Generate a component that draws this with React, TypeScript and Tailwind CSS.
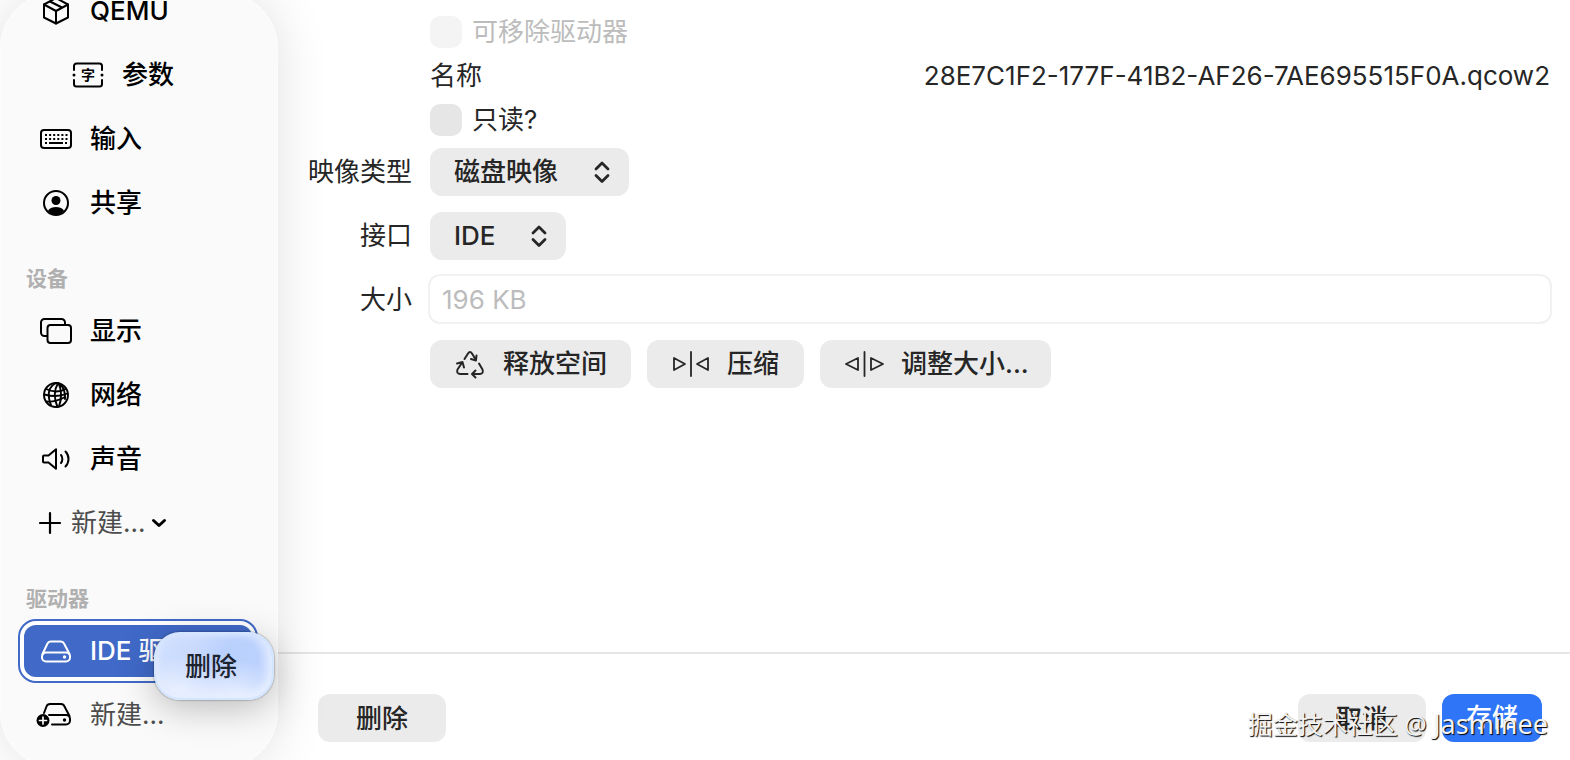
/**
 * Virtual machine settings: sidebar navigation and drive details form.
 */

import React from 'react'
import clsx from 'clsx'

interface IconProps {
  className?: string
}

interface IconFrameProps extends IconProps {
  width?: number
  strokeWidth?: number
  children: React.ReactNode
}

// Shared frame for all outline icons
function IconFrame({ width = 32, strokeWidth = 2, className, children }: IconFrameProps) {
  return (
    <svg
      width={width}
      height={32}
      viewBox={`0 0 ${width} 32`}
      fill="none"
      stroke="currentColor"
      strokeWidth={strokeWidth}
      strokeLinecap="round"
      strokeLinejoin="round"
      aria-hidden="true"
      className={clsx('shrink-0', className)}
    >
      {children}
    </svg>
  )
}

function BoxIcon() {
  return (
    <IconFrame>
      <path d="M16 3 28 9.5v13L16 28.500 4 22.500v-13z" />
      <path d="M4 9.500 16 16l12-6.500M16 16v12.500M10 6.500l12 6" />
    </IconFrame>
  )
}

function ArgumentsIcon() {
  return (
    <IconFrame>
      <path d="M2 11V7a2.500 2.500 0 0 1 2.500-2.500h23A2.500 2.500 0 0 1 30 7v4M2 21v4a2.500 2.500 0 0 0 2.500 2.500h23A2.500 2.500 0 0 0 30 25v-4" />
      <circle cx="2" cy="16" r="1.500" fill="currentColor" stroke="none" />
      <circle cx="30" cy="16" r="1.500" fill="currentColor" stroke="none" />
      <text
        x="16"
        y="21"
        textAnchor="middle"
        fill="currentColor"
        stroke="none"
        className="text-[14px] font-bold"
      >
        字
      </text>
    </IconFrame>
  )
}

function KeyboardIcon() {
  return (
    <IconFrame>
      <rect x="1" y="7" width="30" height="18" rx="3" />
      <path d="M5 12h22.500M5 16h22.500" strokeDasharray="2 2.100" strokeLinecap="butt" />
      <path d="M5 20h2M9 20h14M25 20h2" strokeLinecap="butt" />
    </IconFrame>
  )
}

function PersonIcon() {
  return (
    <IconFrame>
      <circle cx="16" cy="16" r="12" />
      <circle cx="16" cy="13.500" r="4.500" fill="currentColor" stroke="none" />
      <path d="M8 23.500c2-3 5-3.500 8-3.500s6 .5 8 3.500c-2 3-5 4.500-8 4.500s-6-1.500-8-4.500z" fill="currentColor" stroke="none" />
    </IconFrame>
  )
}

function DisplayIcon() {
  return (
    <IconFrame>
      <path d="M7 21H4.500A3.500 3.500 0 0 1 1 17.500v-10A3.500 3.500 0 0 1 4.500 4h17A3.500 3.500 0 0 1 25 7.500V9" />
      <rect x="7.500" y="10" width="23.500" height="18" rx="3" />
    </IconFrame>
  )
}

function GlobeIcon() {
  return (
    <IconFrame strokeWidth={1.9}>
      <circle cx="16" cy="16" r="12" />
      <path d="M18 4c-4 7-4 16-.5 24M16 4C10 7 8 13 9 19c.3 3 1 5 2 7M18.500 4c3 7 3.500 15 .5 23.500M20 5c4 4 5.500 9 5 15" />
      <path d="M6 10c6 3 14 3.500 19.500 0M4.500 15.500c7 2 16 2 23-1M6 22.500c6 .5 13-1 19-4.500" />
    </IconFrame>
  )
}

function SpeakerIcon() {
  return (
    <IconFrame>
      <path d="M4 12.500h4.500L16 6.200V25.800L8.500 19.500H4a1 1 0 0 1-1-1v-5a1 1 0 0 1 1-1z" />
      <path d="M21 12c1.800 2.200 1.800 5.800 0 8M25.500 8.500c4 4.200 4 10.800 0 15" />
    </IconFrame>
  )
}

function DriveIcon() {
  return (
    <IconFrame>
      <path d="M2.500 19 7.500 8.500A3.500 3.500 0 0 1 10.500 6.500h10.500a3.500 3.500 0 0 1 3 2L29.500 19" />
      <path d="M6 17.500h20a4 4 0 0 1 4 4v1a4 4 0 0 1-4 4H6a4 4 0 0 1-4-4v-1a4 4 0 0 1 4-4z" />
      <circle cx="24.500" cy="22" r="1.700" fill="currentColor" stroke="none" />
    </IconFrame>
  )
}

function DrivePlusIcon() {
  return (
    <IconFrame width={36}>
      <path d="M8 14 10.500 7.500A4 4 0 0 1 14 5h11a4 4 0 0 1 3.500 2.500L33.500 17" />
      <path d="M13 16h17a4 4 0 0 1 4 4v1.500a4 4 0 0 1-4 4H16" />
      <circle cx="28.500" cy="21" r="1.700" fill="currentColor" stroke="none" />
      <circle cx="7" cy="21.500" r="6.500" fill="currentColor" stroke="none" />
      <path d="M3.500 21.500h7M7 18v7" stroke="#fafafa" strokeWidth="1.700" />
    </IconFrame>
  )
}

function PlusIcon() {
  return (
    <IconFrame width={22} strokeWidth={2.2}>
      <path d="M1 16h20M11 6v20" />
    </IconFrame>
  )
}

function ChevronIcon() {
  return (
    <IconFrame width={16} strokeWidth={3}>
      <path d="m2.500 13.500 5.500 5 5.500-5" />
    </IconFrame>
  )
}

function UpDownIcon({ className }: IconProps) {
  return (
    <IconFrame width={18} strokeWidth={2.8} className={className}>
      <path d="m3 13 6-6 6 6M3 19.500l6 6 6-6" />
    </IconFrame>
  )
}

function RecycleIcon() {
  return (
    <IconFrame strokeWidth={2}>
      <path d="M10.500 11 14 5.500q2-3 4 0L22 12M22.500 7.500 22 12.500l-5-1.500" />
      <path d="m25 15.500 3.500 6q1.500 4-2.500 4.500h-7.500M21.500 22.500 18 26l3.500 3.500" />
      <path d="M13.500 26H6q-4-.5-2.500-4.500L8.500 14M3 15.500l5.500-1.500 1.500 5.500" />
    </IconFrame>
  )
}

function CompressIcon() {
  return (
    <IconFrame width={38} strokeWidth={1.8}>
      <path d="M2 10v12l11-6zM36 10v12l-11-6zM19 4v24" />
    </IconFrame>
  )
}

function ExpandIcon() {
  return (
    <IconFrame width={40} strokeWidth={1.8}>
      <path d="M14 10v12L2 16zM27 10v12l12-6zM20.500 4v24" />
    </IconFrame>
  )
}

interface NavItemProps {
  icon: React.ElementType
  label: string
  nested?: boolean
}

function NavItem({ icon: Icon, label, nested }: NavItemProps) {
  return (
    <li>
      <a
        href="#"
        className={clsx('flex h-16 items-center gap-[18px] text-black', nested ? 'pl-[72px]' : 'pl-10')}
      >
        <Icon />
        {label}
      </a>
    </li>
  )
}

function SectionTitle({ children }: { children: React.ReactNode }) {
  return (
    <h2 className="flex h-16 items-end pb-1 pl-[26px] text-[21px] leading-8 font-bold text-[#b0b0b0]">
      {children}
    </h2>
  )
}

const generalItems: NavItemProps[] = [
  { icon: BoxIcon, label: 'QEMU' },
  { icon: ArgumentsIcon, label: '参数', nested: true },
  { icon: KeyboardIcon, label: '输入' },
  { icon: PersonIcon, label: '共享' },
]

const deviceItems: NavItemProps[] = [
  { icon: DisplayIcon, label: '显示' },
  { icon: GlobeIcon, label: '网络' },
  { icon: SpeakerIcon, label: '声音' },
]

function Sidebar() {
  return (
    <aside className="relative z-10 -my-2 w-[278px] shrink-0 rounded-[56px] bg-[#fafafa] font-medium shadow-[0_0_52px_rgba(0,0,0,0.12),inset_0_0_3px_#fff]">
      {/* List is scrolled slightly, so the first row is cut off */}
      <nav className="-mt-[13px] pb-5">
        <ul>
          {generalItems.map((item) => (
            <NavItem key={item.label} {...item} />
          ))}
        </ul>

        <SectionTitle>设备</SectionTitle>
        <ul>
          {deviceItems.map((item) => (
            <NavItem key={item.label} {...item} />
          ))}
        </ul>
        <button type="button" className="flex h-16 items-center pl-[39px] text-black">
          <PlusIcon />
          <span className="mr-1.5 ml-2.5 font-normal text-[#4d4d4d]">新建...</span>
          <ChevronIcon />
        </button>

        <SectionTitle>驱动器</SectionTitle>
        <div className="relative">
          <a
            href="#"
            aria-current="page"
            className="mr-5 ml-[18px] flex h-16 rounded-[18px] border-2 border-[#4069c8] bg-white p-1 text-white"
          >
            <span className="flex flex-1 items-center gap-[18px] overflow-hidden rounded-xl bg-[#4069c8] pl-4 whitespace-nowrap">
              <DriveIcon />
              IDE 驱动器
            </span>
          </a>
          {/* Context menu */}
          <div
            role="menu"
            className="absolute top-[13px] right-1 rounded-[26px] shadow-[0_8px_36px_rgba(0,0,0,0.25),0_0_2px_rgba(0,0,0,0.6)]"
          >
            <button
              type="button"
              role="menuitem"
              className="h-[68px] w-[120px] rounded-[26px] border-2 border-[#d3e5ff] bg-[#bad0fd] bg-[radial-gradient(ellipse_at_20%_95%,#eef3ff_0%,transparent_45%),radial-gradient(ellipse_at_70%_100%,#e9f0ff_0%,transparent_42%),linear-gradient(125deg,#d2e1fe_0%,#c9dafd_30%,transparent_50%)] pt-0.5 pr-1.5 text-[#1d2430] shadow-[inset_0_-6px_7px_#e6eeff,inset_-8px_0_9px_#dbe7ff,inset_3px_0_6px_#d6e4ff]"
            >
              删除
            </button>
          </div>
        </div>
        <button type="button" className="flex h-16 items-center gap-[18px] pl-9 text-black">
          <DrivePlusIcon />
          <span className="font-normal text-[#4d4d4d]">新建...</span>
        </button>
      </nav>
    </aside>
  )
}

interface SelectFieldProps {
  id: string
  value: string
  className: string
}

function SelectField({ id, value, className }: SelectFieldProps) {
  return (
    <div className="relative w-fit">
      <select
        id={id}
        defaultValue={value}
        className={clsx('h-12 appearance-none rounded-xl bg-[#ebebeb] pr-12 pl-6 font-medium', className)}
      >
        <option>{value}</option>
      </select>
      <UpDownIcon className="pointer-events-none absolute top-2 right-[18px]" />
    </div>
  )
}

interface CheckFieldProps {
  id: string
  label: string
  disabled?: boolean
}

function CheckField({ id, label, disabled }: CheckFieldProps) {
  return (
    <div className="col-start-2 flex h-8 items-center gap-2.5">
      <input
        id={id}
        type="checkbox"
        disabled={disabled}
        className="size-8 appearance-none rounded-[10px] bg-[#e6e6e6] disabled:bg-[#f4f4f4]"
      />
      <label htmlFor={id} className={clsx(disabled && 'text-[#bcbcbc]')}>
        {label}
      </label>
    </div>
  )
}

const toolButtonClass = 'flex h-12 items-center gap-[17px] rounded-xl bg-[#ebebeb] font-medium'

function DriveForm() {
  return (
    <form className="grid grid-cols-[104px_1fr] items-center gap-x-[18px] gap-y-3 pt-4 pr-5 pl-[30px]">
      <CheckField id="removable" label="可移除驱动器" disabled />
      <div className="col-start-2 flex h-8 items-center justify-between">
        <span>名称</span>
        <span>28E7C1F2-177F-41B2-AF26-7AE695515F0A.qcow2</span>
      </div>
      <CheckField id="readonly" label="只读?" />

      <label htmlFor="image-type" className="text-right whitespace-nowrap">
        映像类型
      </label>
      <SelectField id="image-type" value="磁盘映像" className="w-[199px]" />

      <label htmlFor="interface" className="mt-1 text-right">
        接口
      </label>
      <div className="mt-1">
        <SelectField id="interface" value="IDE" className="w-[136px]" />
      </div>

      <label htmlFor="size" className="mt-1 text-right">
        大小
      </label>
      <input
        id="size"
        type="text"
        placeholder="196 KB"
        className="mt-0.5 -mr-0.5 -ml-0.5 h-[50px] rounded-xl border-2 border-[#f1f1f1] bg-white px-3 placeholder:text-[#bcbcbc]"
      />

      <div className="col-start-2 mt-1 flex gap-4">
        <button type="button" className={clsx(toolButtonClass, 'px-6')}>
          <RecycleIcon />
          释放空间
        </button>
        <button type="button" className={clsx(toolButtonClass, 'px-[25px]')}>
          <CompressIcon />
          压缩
        </button>
        <button type="button" className={clsx(toolButtonClass, 'pr-[22px] pl-6')}>
          <ExpandIcon />
          调整大小...
        </button>
      </div>
    </form>
  )
}

function Footer() {
  return (
    <footer className="relative mt-auto flex h-[108px] gap-4 border-t-2 border-[#e6e6e6] pt-10 pr-7 pl-10 font-medium">
      <button type="button" className="mr-auto h-12 w-32 rounded-xl bg-[#ebebeb] pt-0.5">
        删除
      </button>
      <button type="button" className="h-12 w-32 rounded-xl bg-[#ebebeb] pt-0.5">
        取消
      </button>
      <button type="button" className="h-12 w-[100px] rounded-xl bg-[#2f75f7] text-white">
        存储
      </button>
      <span className="pointer-events-none absolute right-[22px] bottom-[18px] font-['Noto_Sans','Noto_Sans_CJK_SC',sans-serif] text-[25px] leading-9 font-normal text-[#f2f2f2] [text-shadow:1px_1px_1px_#000]">
        掘金技术社区 @ <span className="text-[27px]">Jasminee</span>
      </span>
    </footer>
  )
}

export default function App() {
  return (
    <div className="flex min-h-screen overflow-hidden bg-white font-['Inter','Noto_Sans_CJK_SC',sans-serif] text-[26px] leading-8 text-[#262626]">
      <Sidebar />
      <main className="flex min-w-0 flex-1 flex-col">
        <DriveForm />
        <Footer />
      </main>
    </div>
  )
}
